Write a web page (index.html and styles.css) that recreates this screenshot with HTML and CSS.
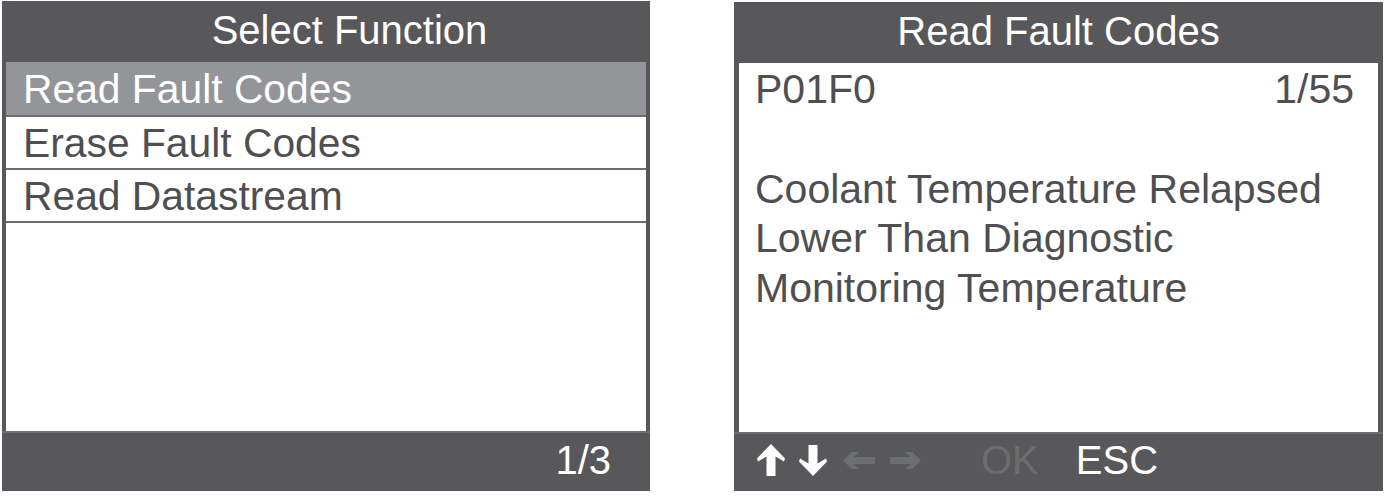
FILE: index.html
```html
<!DOCTYPE html>
<html lang="en">
<head>
<meta charset="utf-8">
<title>Scanner screens</title>
<link rel="stylesheet" href="styles.css">
</head>
<body>
<main class="page">
  <section class="screen screen-left">
    <header class="bar title title-left">Select Function</header>
    <div class="panel">
      <div class="row row-first sel">Read Fault Codes</div>
      <div class="row">Erase Fault Codes</div>
      <div class="row">Read Datastream</div>
    </div>
    <footer class="foot foot-left"><span class="count">1/3</span></footer>
  </section>

  <section class="screen screen-right">
    <header class="bar title">Read Fault Codes</header>
    <div class="panel panel-text">
      <div class="code-line"><span>P01F0</span><span>1/55</span></div>
      <div class="blank">&nbsp;</div>
      <p class="desc">Coolant Temperature Relapsed<br>Lower Than Diagnostic<br>Monitoring Temperature</p>
    </div>
    <footer class="foot foot-right">
      <svg class="ico ico-up" width="28" height="32" viewBox="0 0 28 32"><path d="M14 0 L28 14.5 L27 17.5 L18.5 12.5 V32 H9.5 V12.5 L1 17.5 L0 14.5 Z" fill="#ffffff"/></svg>
      <svg class="ico ico-down" width="28" height="31" viewBox="0 0 28 31"><path d="M14 31 L28 16.5 L27 13.5 L18.5 18.5 V0 H9.5 V18.5 L1 13.5 L0 16.5 Z" fill="#ffffff"/></svg>
      <svg class="ico ico-left" width="32" height="17" viewBox="0 0 32 17"><path d="M0 8.5 L8.5 0 H16 L10.5 5 H32 V12 H10.5 L16 17 H8.5 Z" fill="#6d6e70"/></svg>
      <svg class="ico ico-right" width="31" height="17" viewBox="0 0 31 17"><path d="M31 8.5 L22.5 0 H15 L20.5 5 H0 V12 H20.5 L15 17 H22.5 Z" fill="#6d6e70"/></svg>
      <span class="key key-ok">OK</span>
      <span class="key key-esc">ESC</span>
    </footer>
  </section>
</main>
</body>
</html>
```

FILE: styles.css
```css
html, body {
  margin: 0;
  padding: 0;
  background: #ffffff;
}

body {
  font-family: "Liberation Sans", Arial, sans-serif;
  font-size: 40.8px;
  color: #4f4f51;
}

.page {
  display: flex;
  align-items: flex-start;
  gap: 84px;
  padding: 1px 0 0 2px;
}

.screen {
  display: flex;
  flex-direction: column;
  background: #58585a;
}

.screen-left {
  width: 648px;
  height: 490px;
}

.screen-right {
  width: 649px;
  height: 489px;
  margin-top: 1px;
}

.bar {
  height: 61px;
  flex: none;
}

.title {
  color: #ffffff;
  text-align: center;
  font-size: 40px;
  line-height: 58px;
  padding-bottom: 3px;
  box-sizing: border-box;
  white-space: nowrap;
}

.title-left {
  padding-left: 47px;
}

.panel {
  flex: 1;
  background: #ffffff;
  margin: 0 4px;
  min-height: 0;
}

.screen-right .panel {
  margin: 0 5px;
}

.row {
  box-sizing: border-box;
  height: 53px;
  border-bottom: 2px solid #6d6d6f;
  padding-left: 17px;
  padding-top: 3px;
  line-height: 46px;
  white-space: nowrap;
}

.row-first {
  height: 55px;
  padding-top: 4px;
}

.sel {
  background: #939598;
  color: #ffffff;
}

.panel-text {
  padding: 2px 24px 0 16px;
  font-size: 41px;
  line-height: 49.5px;
}

.code-line {
  display: flex;
  justify-content: space-between;
}

.blank {
  height: 50px;
}

.desc {
  margin: 0;
  white-space: nowrap;
}

.foot {
  flex: none;
  display: flex;
  align-items: center;
  border-top: 2px solid #6e6e70;
  box-sizing: border-box;
  padding-bottom: 5px;
  line-height: 46px;
  font-size: 40px;
}

.foot-left {
  height: 60px;
  justify-content: flex-end;
  padding-right: 39px;
  color: #ffffff;
}

.foot-right {
  height: 59px;
  padding-left: 23px;
  color: #ffffff;
}

.ico {
  display: block;
  flex: none;
}

.ico-up {
  margin-top: -1px;
}

.ico-down {
  margin-left: 14px;
}

.ico-left {
  margin-left: 16px;
}

.ico-right {
  margin-left: 15px;
}

.key-ok {
  margin-left: 60px;
  color: #6c6d6f;
}

.key-esc {
  margin-left: 37px;
  color: #ffffff;
}
```
